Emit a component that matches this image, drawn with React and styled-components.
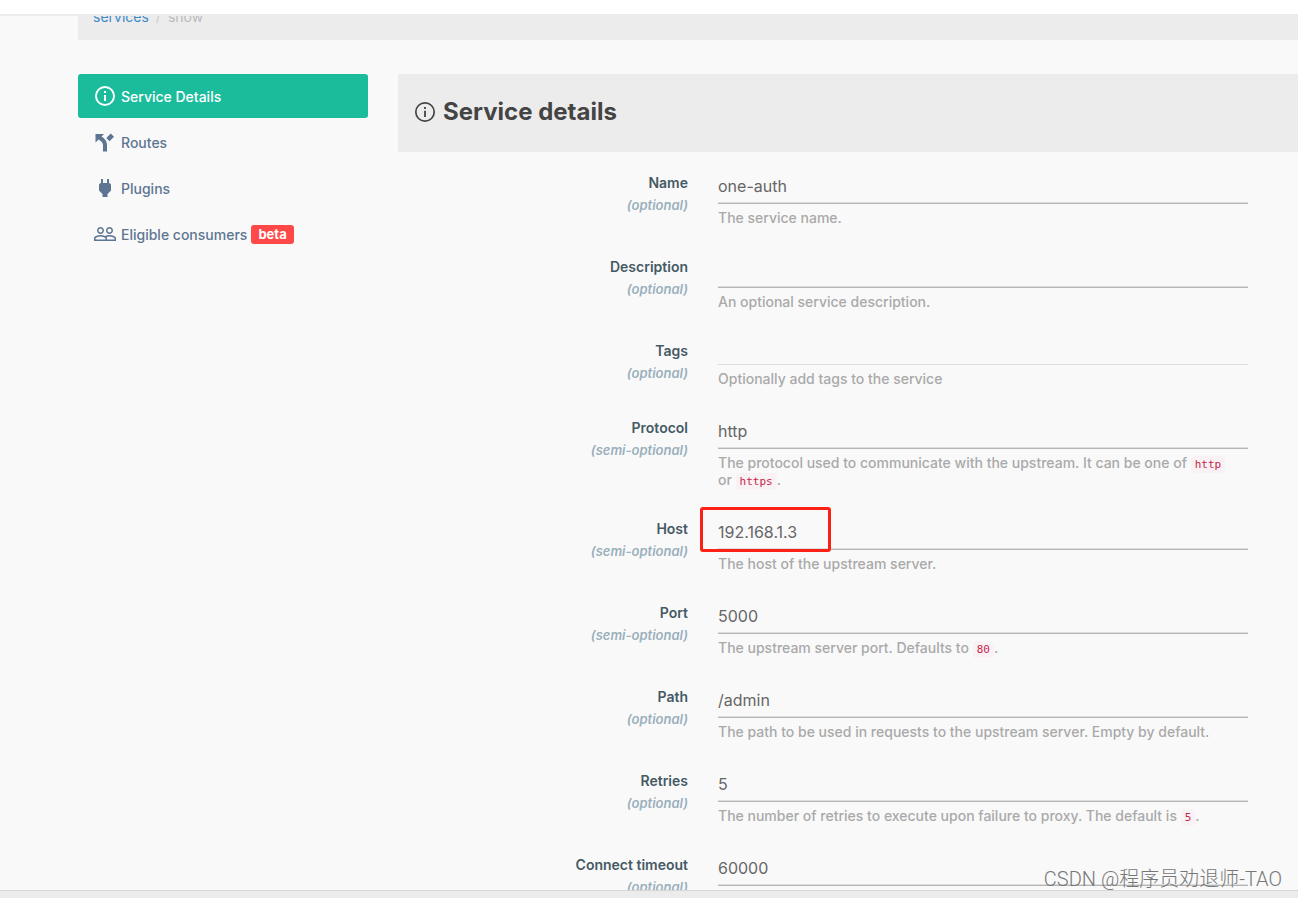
import React, { useState } from "react"
import styled, { createGlobalStyle, css } from "styled-components"

const colors = {
  page: "#f9f9f9",
  panel: "#ececec",
  green: "#1abc9c",
  nav: "#5d7591",
  label: "#455a64",
  hint: "#9ab0bc",
  help: "#a9a9a9",
  text: "#666666",
  red: "#ff4848",
}

const GlobalStyle = createGlobalStyle`
  * {
    box-sizing: border-box;
  }
  body {
    margin: 0;
    background: ${colors.page};
    font-family: Inter, "Noto Sans", sans-serif;
    font-size: 14px;
  }
`

// used inside the help texts below
const Code = styled.code`
  padding: 2px 4px;
  border-radius: 4px;
  font-family: "DejaVu Sans Mono", monospace;
  font-size: 11px;
  font-weight: 400;
  line-height: 1;
  color: #c7254e;
  background: #f9f2f4;
`

const navItems = [
  { icon: "info", label: "Service Details", active: true },
  { icon: "fork", label: "Routes" },
  { icon: "plug", label: "Plugins" },
  { icon: "people", label: "Eligible consumers", badge: "beta" },
]

const fields = [
  { id: "name", label: "Name", hint: "(optional)", value: "one-auth", help: "The service name." },
  { id: "description", label: "Description", hint: "(optional)", value: "", help: "An optional service description." },
  { id: "tags", label: "Tags", hint: "(optional)", value: "", help: "Optionally add tags to the service", slim: true },
  {
    id: "protocol",
    label: "Protocol",
    hint: "(semi-optional)",
    value: "http",
    help: (
      <>
        The protocol used to communicate with the upstream. It can be one of{" "}
        <Code>http</Code> or&nbsp;<Code>https</Code>.
      </>
    ),
  },
  { id: "host", label: "Host", hint: "(semi-optional)", value: "192.168.1.3", help: "The host of the upstream server.", marked: true },
  {
    id: "port",
    label: "Port",
    hint: "(semi-optional)",
    value: "5000",
    help: (
      <>
        The upstream server port. Defaults to <Code>80</Code>.
      </>
    ),
  },
  { id: "path", label: "Path", hint: "(optional)", value: "/admin", help: "The path to be used in requests to the upstream server. Empty by default." },
  {
    id: "retries",
    label: "Retries",
    hint: "(optional)",
    value: "5",
    help: (
      <>
        The number of retries to execute upon failure to proxy. The default is <Code>5</Code>.
      </>
    ),
  },
  { id: "connect", label: "Connect timeout", hint: "(optional)", value: "60000" },
]

const iconPaths = {
  info: "M11 9h2V7h-2M12 20c-4.41 0-8-3.59-8-8s3.59-8 8-8 8 3.59 8 8-3.59 8-8 8m0-18a10 10 0 1 0 0 20 10 10 0 0 0 0-20m-1 15h2v-6h-2v6z",
  fork: "M2.5 4h8.5L8.5 6.600C11.500 8.600 14 11 14 15v6.500h-4V15c0-2.500-1.800-4-4.400-5.600L2.500 12.500zM17.800 3.500l3.200 3.200-4.500 4.600-3.200-3.200z",
  plug: "M16 7V3h-2v4h-4V3H8v4C7 7 6 8 6 9v5.5L9.5 18v3h5v-3l3.5-3.5V9c0-1-1-2-2-2z",
  people:
    "M16.5 13c-1.2 0-3.07.34-4.5 1-1.43-.67-3.3-1-4.5-1C5.33 13 1 14.08 1 16.25V19h22v-2.75c0-2.17-4.33-3.25-6.5-3.25zm-4 4.5h-10v-1.25c0-.54 2.56-1.75 5-1.75s5 1.21 5 1.75v1.25zm9 0H14v-1.25c0-.46-.2-.86-.52-1.22.88-.3 1.96-.53 3.02-.53 2.44 0 5 1.21 5 1.75v1.25zM7.5 12c1.93 0 3.5-1.57 3.5-3.5S9.43 5 7.5 5 4 6.57 4 8.5 5.57 12 7.5 12zm0-5.5c1.1 0 2 .9 2 2s-.9 2-2 2-2-.9-2-2 .9-2 2-2zm9 5.5c1.93 0 3.5-1.57 3.5-3.5S18.43 5 16.5 5 13 6.57 13 8.5s1.57 3.5 3.5 3.5zm0-5.5c1.1 0 2 .9 2 2s-.9 2-2 2-2-.9-2-2 .9-2 2-2z",
}

const NavIcon = ({ name }) => (
  <Icon viewBox="0 0 24 24" aria-hidden="true">
    <path d={iconPaths[name]} fill="currentColor" />
  </Icon>
)

const Field = ({ field }) => {
  const [value, setValue] = useState(field.value)
  return (
    <Row>
      <Label htmlFor={field.id}>
        {field.label}
        <Hint>{field.hint}</Hint>
      </Label>
      <Control>
        <Input
          id={field.id}
          type="text"
          value={value}
          $slim={field.slim}
          onChange={e => setValue(e.target.value)}
        />
        {field.marked && <Marker />}
        {field.help && <Help>{field.help}</Help>}
      </Control>
    </Row>
  )
}

const App = () => {
  return (
    <Wrapper>
      <GlobalStyle />
      <TopBar />
      <Scroller>
        <Breadcrumb aria-label="breadcrumb">
          <CrumbLink href="#services">services</CrumbLink>
          <Slash>/</Slash>
          <span>show</span>
        </Breadcrumb>
        <Columns>
          <Sidebar>
            {navItems.map(item => (
              <NavLink key={item.label} href={`#${item.icon}`} $active={item.active}>
                <NavIcon name={item.icon} />
                {item.label}
                {item.badge && <Badge>{item.badge}</Badge>}
              </NavLink>
            ))}
          </Sidebar>
          <Main>
            <PanelHeader>
              <Icon viewBox="0 0 24 24" aria-hidden="true">
                <circle cx="12" cy="12" r="9.2" fill="none" stroke="currentColor" strokeWidth="1.7" />
                <path d="M11.1 7h1.8v1.9h-1.8zM11.1 10.800h1.800v6.200h-1.800z" fill="currentColor" />
              </Icon>
              <Title>Service details</Title>
            </PanelHeader>
            <Form>
              {fields.map(field => (
                <Field key={field.id} field={field} />
              ))}
            </Form>
          </Main>
        </Columns>
      </Scroller>
      <Footer />
      <Watermark>CSDN @程序员劝退师-TAO</Watermark>
    </Wrapper>
  )
}

export default App

const Wrapper = styled.div`
  position: relative;
  display: flex;
  flex-direction: column;
  height: 100vh;
  overflow: hidden;
`
const TopBar = styled.header`
  flex: none;
  height: 16px;
  background: white;
  border-bottom: 2px solid ${colors.panel};
`
const Scroller = styled.div`
  flex: 1;
  min-height: 0;
  padding-left: 78px;
  overflow: hidden;
`
const Footer = styled.footer`
  flex: none;
  height: 8px;
  background: ${colors.panel};
  border-top: 1px solid #d6d6d6;
`

////// breadcrumb, already scrolled half under the top bar
const Breadcrumb = styled.nav`
  display: flex;
  align-items: flex-end;
  height: 24px;
  padding: 0 15px 13px;
  overflow: hidden;
  line-height: 20px;
  color: #bbbbbb;
  background: ${colors.panel};
`
const CrumbLink = styled.a`
  color: #428bca;
  text-decoration: none;
`
const Slash = styled.span`
  padding: 0 7px;
  color: #cccccc;
`

const Columns = styled.div`
  display: flex;
  align-items: flex-start;
  gap: 30px;
  margin-top: 34px;
`
const Sidebar = styled.nav`
  display: flex;
  flex: none;
  flex-direction: column;
  gap: 2px;
  width: 290px;
`
const NavLink = styled.a`
  display: flex;
  align-items: center;
  gap: 4px;
  height: 44px;
  padding: 0 15px;
  border-radius: 3px;
  font-weight: 500;
  color: ${colors.nav};
  text-decoration: none;

  ${props =>
    props.$active &&
    css`
      color: white;
      background: ${colors.green};
    `}
`
const Icon = styled.svg`
  flex: none;
  width: 24px;
  height: 24px;
`
const Badge = styled.span`
  padding: 0 7px;
  border-radius: 3px;
  line-height: 19px;
  font-size: 13px;
  font-weight: 700;
  color: white;
  background: ${colors.red};
`

const Main = styled.main`
  flex: 1;
  min-width: 0;
`
const PanelHeader = styled.div`
  display: flex;
  align-items: center;
  gap: 6px;
  height: 78px;
  padding: 0 15px 3px;
  color: #444444;
  background: ${colors.panel};
`
const Title = styled.h1`
  margin: 0;
  font-size: 24px;
  font-weight: 700;
  line-height: 33px;
`
const Form = styled.form`
  display: flex;
  flex-direction: column;
  gap: 28px;
  padding: 18px 50px 28px 0;
`
const Row = styled.div`
  display: grid;
  grid-template-columns: 290px 1fr;
  column-gap: 30px;
`
const Label = styled.label`
  padding-top: 2px;
  line-height: 22px;
  text-align: right;
  font-weight: 600;
  color: ${colors.label};
`
const Hint = styled.em`
  display: block;
  font-size: 13px;
  color: ${colors.hint};
`
const Control = styled.div`
  position: relative;
`
const Input = styled.input`
  display: block;
  width: 100%;
  height: ${props => (props.$slim ? "27px" : "34px")};
  padding: 0 0 2px;
  border: none;
  border-bottom: 1px solid ${props => (props.$slim ? "#dddddd" : "#b5b5b5")};
  box-shadow: ${props => (props.$slim ? "none" : "inset 0 -1px 0 #dddddd")};
  outline: none;
  font-family: inherit;
  font-size: 16px;
  color: ${colors.text};
  background: transparent;
`
const Help = styled.p`
  margin: 5px 0 0;
  font-weight: 500;
  line-height: 17px;
  color: ${colors.help};
`
////// red frame drawn over the host value
const Marker = styled.span`
  position: absolute;
  top: -9px;
  left: -18px;
  width: 131px;
  height: 45px;
  border: 3px solid #fb2115;
  border-radius: 3px;
  pointer-events: none;
`
const Watermark = styled.div`
  position: absolute;
  right: 16px;
  bottom: 4px;
  font-family: Roboto, "Noto Sans CJK SC", sans-serif;
  font-size: 20px;
  font-weight: 300;
  line-height: 30px;
  color: #777777;
`
